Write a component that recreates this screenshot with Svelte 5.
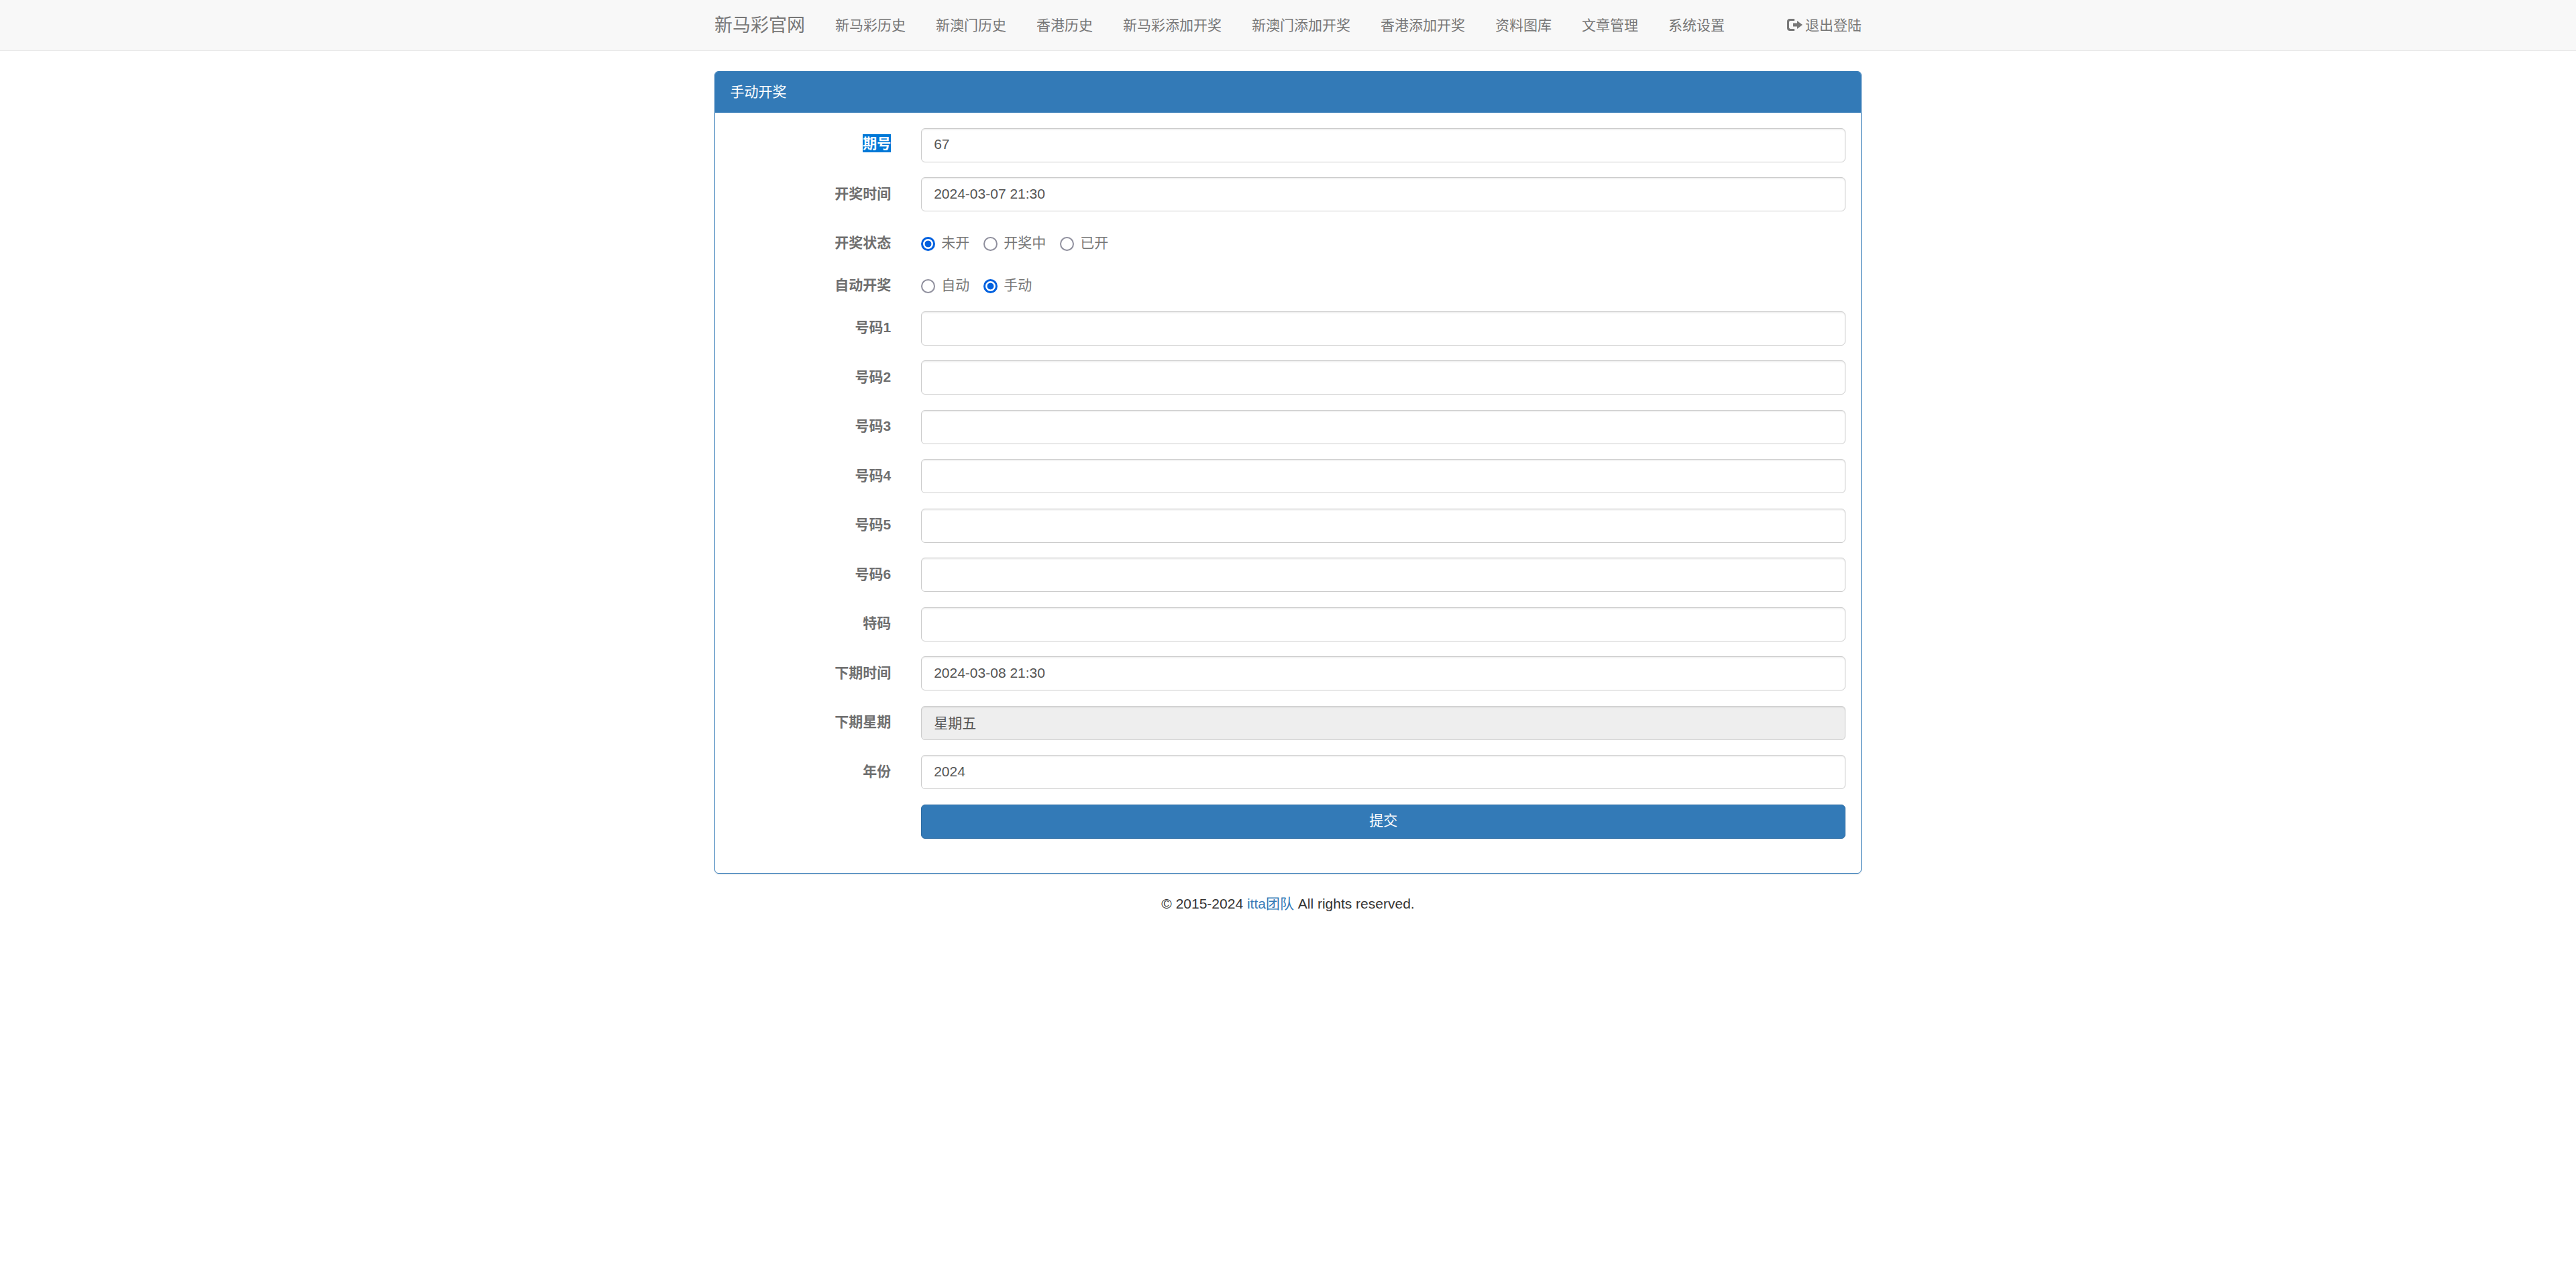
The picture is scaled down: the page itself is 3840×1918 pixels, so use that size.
<script>
  const navItems = ['新马彩历史', '新澳门历史', '香港历史', '新马彩添加开奖', '新澳门添加开奖', '香港添加开奖', '资料图库', '文章管理', '系统设置'];
  const numbers = ['号码1', '号码2', '号码3', '号码4', '号码5', '号码6', '特码'];
</script>

<div class="page">
  <nav class="navbar">
    <div class="container nav-inner">
      <a class="brand" href="#top">新马彩官网</a>
      <ul class="nav">
        {#each navItems as item}
          <li><a href="#top">{item}</a></li>
        {/each}
      </ul>
      <a class="logout" href="#top">
        <svg class="glyph" viewBox="0 0 23 18" aria-hidden="true">
          <path d="M11 0H4C1.5 0 0 1.5 0 4v10c0 2.5 1.5 4 4 4h7v-3H5c-1 0-2-1-2-2V5c0-1 1-2 2-2h6z" />
          <path d="M9 6.5h6V3l8 6-8 6v-3.5H9z" />
        </svg>
        退出登陆
      </a>
    </div>
  </nav>

  <main class="container">
    <section class="panel">
      <header class="panel-heading">手动开奖</header>
      <form class="panel-body">
        <div class="row">
          <div class="label"><span class="selected">期号</span></div>
          <div class="field"><input class="control" value="67" /></div>
        </div>
        <div class="row">
          <div class="label">开奖时间</div>
          <div class="field"><input class="control" value="2024-03-07 21:30" /></div>
        </div>
        <div class="row">
          <div class="label">开奖状态</div>
          <div class="field radios">
            <label><input type="radio" name="status" checked />未开</label>
            <label><input type="radio" name="status" />开奖中</label>
            <label><input type="radio" name="status" />已开</label>
          </div>
        </div>
        <div class="row">
          <div class="label">自动开奖</div>
          <div class="field radios">
            <label><input type="radio" name="auto" />自动</label>
            <label><input type="radio" name="auto" checked />手动</label>
          </div>
        </div>
        {#each numbers as n}
          <div class="row">
            <div class="label">{n}</div>
            <div class="field"><input class="control" /></div>
          </div>
        {/each}
        <div class="row">
          <div class="label">下期时间</div>
          <div class="field"><input class="control" value="2024-03-08 21:30" /></div>
        </div>
        <div class="row">
          <div class="label">下期星期</div>
          <div class="field"><input class="control" value="星期五" disabled /></div>
        </div>
        <div class="row">
          <div class="label">年份</div>
          <div class="field"><input class="control" value="2024" /></div>
        </div>
        <div class="row last">
          <div class="label"></div>
          <div class="field"><button type="button" class="btn">提交</button></div>
        </div>
      </form>
    </section>
    <footer class="footer">© 2015-2024 <a href="#top">itta团队</a> All rights reserved.</footer>
  </main>
</div>

<style>
  :global(body) {
    margin: 0;
    background: #fff;
  }
  .page {
    zoom: 1.5;
    font-family: "Liberation Sans", "Noto Sans CJK SC", sans-serif;
    font-size: 14px;
    line-height: 20px;
    color: #333;
  }
  .container {
    box-sizing: border-box;
    width: 1170px;
    margin: 0 auto;
    padding: 0 15px;
  }
  .navbar {
    height: 50.667px;
    box-sizing: border-box;
    background: #f8f8f8;
    border-bottom: 0.667px solid #e7e7e7;
    margin-bottom: 20px;
  }
  .nav-inner {
    display: flex;
    align-items: center;
    height: 50px;
  }
  .brand {
    font-size: 18px;
    color: #777;
    text-decoration: none;
    padding-right: 15px;
    white-space: nowrap;
  }
  .nav {
    display: flex;
    list-style: none;
    margin: 0;
    padding: 0;
    flex: 1;
  }
  .nav a {
    display: block;
    padding: 15px;
    color: #777;
    text-decoration: none;
    white-space: nowrap;
  }
  .logout {
    display: flex;
    align-items: center;
    color: #777;
    text-decoration: none;
    white-space: nowrap;
  }
  .glyph {
    width: 15.33px;
    height: 12px;
    margin-right: 2.7px;
    fill: #777;
    position: relative;
    top: -0.3px;
  }
  .panel {
    background: #fff;
    border: 0.667px solid #337ab7;
    border-radius: 4px;
    box-shadow: 0 1px 1px rgba(0, 0, 0, 0.05);
    margin-bottom: 20px;
  }
  .panel-heading {
    padding: 10px 15px 10.667px;
    background: #337ab7;
    border-radius: 3px 3px 0 0;
    color: #fff;
  }
  .panel-body {
    padding: 15px 15px 19.33px;
    display: block;
    margin: 0;
  }
  .row {
    display: flex;
    margin: 0 -15px 15px;
  }
  .label {
    box-sizing: border-box;
    width: 16.66667%;
    padding: 6.5px 15px 0;
    text-align: right;
    font-weight: 700;
    color: #6f6f6f;
  }
  .selected {
    display: inline-block;
    height: 18px;
    line-height: 18px;
    background: #0078d7;
    color: #fff;
    vertical-align: top;
  }
  .field {
    box-sizing: border-box;
    width: 83.33333%;
    padding: 0 15px;
  }
  .control {
    display: block;
    box-sizing: border-box;
    width: 100%;
    height: 34px;
    padding: 5.5px 12px 6.5px;
    margin: 0;
    font: inherit;
    color: #555;
    background: #fff;
    border: 0.667px solid #ccc;
    border-radius: 4px;
    box-shadow: inset 0 1px 1px rgba(0, 0, 0, 0.075);
    outline: none;
  }
  .control:disabled {
    background: #eee;
    color: #555;
    opacity: 1;
  }
  .radios {
    display: flex;
    gap: 14px;
    padding-top: 6.5px;
    padding-bottom: 0.5px;
    color: #777;
  }
  .radios label {
    display: flex;
    align-items: center;
    gap: 6px;
  }
  .radios input {
    appearance: none;
    -webkit-appearance: none;
    box-sizing: border-box;
    width: 14px;
    height: 14px;
    margin: 1px 0 0;
    background: #fff;
    border: 1.8px solid #8f8f9d;
    border-radius: 50%;
  }
  .radios input:checked {
    border: 2px solid #0060df;
    background: radial-gradient(circle, #0060df 0 3.1px, #fff 3.5px);
  }
  .btn {
    display: block;
    box-sizing: border-box;
    width: 100%;
    height: 34px;
    padding: 5.5px 12px 6.5px;
    margin: 0;
    font: inherit;
    color: #fff;
    background: #337ab7;
    border: 0.667px solid #2e6da4;
    border-radius: 4px;
  }
  .footer {
    text-align: center;
    color: #333;
  }
  .footer a {
    color: #337ab7;
    text-decoration: none;
  }
</style>
